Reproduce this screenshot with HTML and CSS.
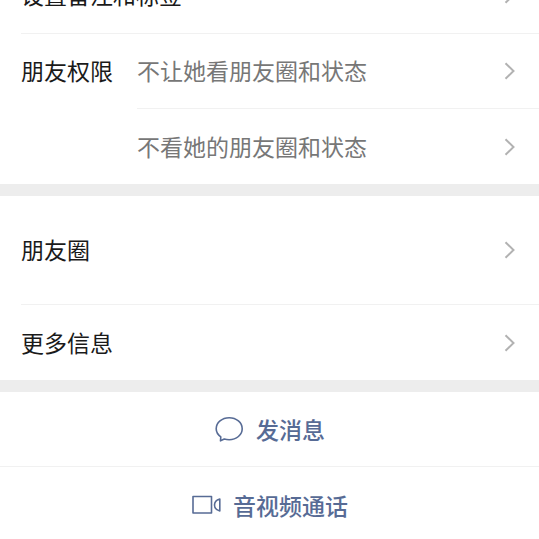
FILE: index.html
```html
<!DOCTYPE html>
<html lang="zh-CN">
<head>
<meta charset="utf-8">
<meta name="viewport" content="width=device-width, initial-scale=1">
<title>详细资料</title>
<link rel="stylesheet" href="styles.css">
</head>
<body>
<main class="profile">
  <section class="group">
    <a class="row first divided" href="#remark">
      <span class="label">设置备注和标签</span>
      <svg class="chevron" viewBox="0 0 12 18" aria-hidden="true"><path d="M1.5 1.200 9.500 9l-8 7.800"/></svg>
    </a>
    <div class="permissions">
      <span class="label">朋友权限</span>
      <div class="options">
        <a class="row divided" href="#hide-mine">
          <span class="value">不让她看朋友圈和状态</span>
          <svg class="chevron" viewBox="0 0 12 18" aria-hidden="true"><path d="M1.5 1.200 9.500 9l-8 7.800"/></svg>
        </a>
        <a class="row" href="#hide-hers">
          <span class="value">不看她的朋友圈和状态</span>
          <svg class="chevron" viewBox="0 0 12 18" aria-hidden="true"><path d="M1.5 1.200 9.500 9l-8 7.800"/></svg>
        </a>
      </div>
    </div>
  </section>
  <section class="group">
    <a class="row tall divided" href="#moments">
      <span class="label">朋友圈</span>
      <svg class="chevron" viewBox="0 0 12 18" aria-hidden="true"><path d="M1.5 1.200 9.500 9l-8 7.800"/></svg>
    </a>
    <a class="row" href="#more">
      <span class="label">更多信息</span>
      <svg class="chevron" viewBox="0 0 12 18" aria-hidden="true"><path d="M1.5 1.200 9.500 9l-8 7.800"/></svg>
    </a>
  </section>
  <section class="actions">
    <button class="action divided" type="button">
      <svg class="icon" viewBox="0 0 30 26" aria-hidden="true"><path d="M6.800 20.800C3.800 18.700 2.200 15.900 2.200 12.700 2.200 6.500 8 1.700 15.200 1.700s13 4.900 13 11-5.700 11-13 11c-1.800 0-3.300-.2-4.900-.7L6.500 24.800Z"/></svg>
      <span>发消息</span>
    </button>
    <button class="action" type="button">
      <svg class="icon" viewBox="0 0 30 26" aria-hidden="true"><path d="M2 4.500h18.500v16.500H2ZM28.800 7v12c-3.100-.8-5.300-2.900-5.300-6s2.200-5.200 5.300-6Z"/></svg>
      <span>音视频通话</span>
    </button>
  </section>
</main>
</body>
</html>
```
FILE: styles.css
```css
* {
  box-sizing: border-box;
}

body {
  margin: 0;
  overflow: hidden;
  background: #fff;
  color: #1a1a1a;
  font-family: "Noto Sans CJK SC", sans-serif;
  font-size: 23px;
  line-height: 32px;
}

/* The list is scrolled part of the way past its first row. */
.profile {
  margin-top: -44px;
}

.group {
  padding-left: 21px;
  border-bottom: 12px solid #ededed;
}

.row {
  display: flex;
  align-items: center;
  justify-content: space-between;
  min-height: 75px;
  padding-right: 23px;
  color: inherit;
  text-decoration: none;
}

.first {
  min-height: 78px;
}

.tall {
  min-height: 109px;
}

.divided {
  border-bottom: 1px solid #f1f1f1;
}

.permissions {
  display: flex;
}

.permissions > .label {
  flex: none;
  width: 116px;
  padding-top: 20px;
}

.options {
  flex: 1;
}

.row > .label,
.value {
  padding-bottom: 2px;
}

.value {
  color: #777;
}

.chevron {
  flex: none;
  width: 12px;
  height: 18px;
  fill: none;
  stroke: #b2b2b2;
  stroke-width: 2;
}

.action {
  display: flex;
  align-items: center;
  justify-content: center;
  gap: 12px;
  width: 100%;
  min-height: 75px;
  padding: 0;
  border: 0;
  background: none;
  color: #576b95;
  font: inherit;
  font-weight: 500;
}

.action.divided {
  border-bottom: 1px solid #f1f1f1;
}

.icon {
  width: 30px;
  height: 26px;
  fill: none;
  stroke: #576b95;
  stroke-width: 1.6;
  stroke-linejoin: round;
}
```
